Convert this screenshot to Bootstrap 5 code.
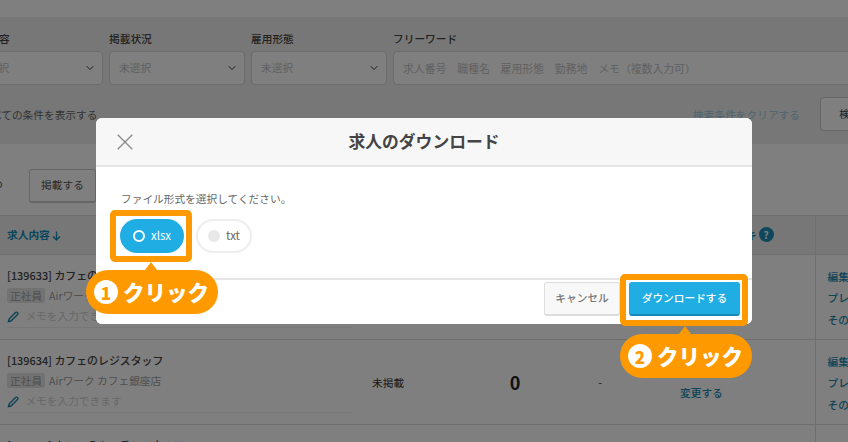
<!DOCTYPE html>
<html lang="ja">
<head>
<meta charset="utf-8">
<title>求人のダウンロード</title>
<link href="https://cdn.jsdelivr.net/npm/bootstrap@5.3.0/dist/css/bootstrap.min.css" rel="stylesheet">
<style>
html,body{height:442px;overflow:hidden}
body{width:848px;font-family:"Noto Sans CJK JP","Noto Sans",sans-serif;font-size:10.7px;color:#333;background:#fff}
.topgap{height:17px;background:#fff}
.filterband{height:127px;background:#eee;padding:14px 0 0 0;border-top:1px solid #e8e8e8}
.fields{gap:6px;margin-left:-33px;width:1000px}
.fieldw{width:136px;flex:none}
.fieldw.wide{width:520px}
.fieldlabel{height:13px;line-height:13px;margin-bottom:6px;font-weight:500;color:#444;white-space:nowrap}
.selbox.form-select,.txtbox.form-control{height:34px;font-size:10.7px;padding:0 28px 0 9px;color:#c2c2c2;border-color:#d8d8d8;border-radius:4px;line-height:32px;background-color:#fff}
.txtbox.form-control{font-size:10.850px}
.selbox.form-select{background-size:10px 8px;background-position:right 7px center}
.txtbox.form-control::placeholder{color:#c2c2c2;opacity:1}
.linksrow{height:34px;margin-top:12px;padding-left:0}
.alltext{color:#666;margin-left:-19px;white-space:nowrap;width:117px;padding-top:2px}
.clearlink{color:#9fcbdb;margin-right:20px;padding-top:2px}
.searchbtn.btn{width:60px;height:34px;font-size:10.7px;background:#fff;border:1px solid #ccc;border-radius:4px;color:#444;padding:0;margin-right:-32px}
.toolband{height:71px;background:#fff;padding-top:25px;border-top:0;gap:26px}
.tooltext{margin-left:-32px;width:35px;text-align:right;color:#444;white-space:nowrap;padding-top:4px}
.toolband .btn{height:34px;width:67px;font-size:10.7px;color:#555;background:#fff;border:1px solid #ccc;border-bottom-width:2px;border-radius:3px;padding:0}
.jobtable.table{table-layout:fixed;width:848px;margin:0;font-size:10.7px;--bs-table-bg:transparent;--bs-table-color:#333;border-color:#dcdcdc}
.jobtable col.c1{width:362px}.jobtable col.c2{width:108px}.jobtable col.c3{width:90px}.jobtable col.c4{width:80px}.jobtable col.c5{width:175px}
.jobtable th{height:39px;padding:0 7px;background:#eee;vertical-align:middle;border-top:1px solid #ddd;font-weight:700;color:#0f8cb8}
.jobtable th.keyhead{padding-right:41px}
.jobtable td{height:85px;padding:0;vertical-align:middle;border-bottom:1px solid #dcdcdc}
.jobtable .act{border-left:1px solid #dcdcdc}
.jobcell{padding:12px 9px 0 7px;height:84px}
.jobtitle{font-size:10.9px;line-height:16px;font-weight:500;color:#444;white-space:nowrap}
.jobmeta{margin-top:5px;line-height:15px;color:#a0a0a0;white-space:nowrap}
.tagchip{display:inline-block;background:#e4e4e4;color:#a0a0a0;border-radius:2px;padding:0 3px;margin-right:4px}
.memoline{margin-top:4px;height:21px;line-height:18px;color:#d0d0d0;border-bottom:1px solid #eee;width:346px;white-space:nowrap}
.jobtable .statuscell{padding:2px 0 0 10px;color:#333}
.jobtable .numcell{text-align:center;font-size:18px;font-weight:600;color:#222}
.dashcell{text-align:center}
.jobtable .changecell{padding-left:40px;padding-top:22px;color:#1b87ad;font-weight:500;white-space:nowrap}
.jobtable .actcell{padding:2px 0 0 12px;color:#1b87ad;font-weight:500;white-space:nowrap;line-height:21.500px}
.qmark{display:inline-flex;width:15px;height:15px;border-radius:50%;background:#1c8fbb;color:#fff;align-items:center;justify-content:center;font-size:10px;font-weight:700;margin-left:2px}
.dimlayer{inset:0;background:rgba(0,0,0,.5);padding:118px 0 0 96px}
.dlgbox.modal-content{width:656px;height:206px;border:0;border-radius:6px;background:#fff;overflow:hidden}
.dlghead.modal-header{height:49px;flex:none;padding:0 20px;background:#f7f7f7;border-bottom:2px solid #e6e6e6;border-radius:0;position:relative;justify-content:center}
.dlgclose{position:absolute;left:21px;top:16px;line-height:0}
.dlgtitle.modal-title{font-size:16.800px;font-weight:700;color:#444;line-height:1}
.dlgbody.modal-body{flex:none;height:111px;padding:26px 24px 0}
.dlgprompt{line-height:12px;color:#666;font-size:10.700px;margin-bottom:14px;padding-left:1px}
.pillopt{height:34px;border-radius:17px;gap:6px;font-size:11.500px}
.pillopt.on{width:64px;background:#1fade4;color:#fff;padding-left:13px}
.pillopt.off{width:56px;background:#fff;border:2px solid #eee;color:#666;padding-left:10px}
.dotring{width:12px;height:12px;border-radius:50%;flex:none}
.on .dotring{border:2px solid #fff}
.off .dotring{background:#e8e8e8}
.dlgfoot.modal-footer{height:46px;flex:none;padding:0 12px 6px 0;background:#fff;border-top:2px solid #e6e6e6;border-radius:0;gap:9px;flex-wrap:nowrap;justify-content:flex-end;align-items:center}
.dlgfoot.modal-footer>*{margin:0}
.btncancel.btn,.btnget.btn{height:34px;font-size:10.7px;padding:0;border-radius:3px;font-weight:500}
.btncancel.btn{width:76px;background:#f8f8f8;color:#777;border:1px solid #ddd;border-bottom-width:2px}
.btnget.btn{width:111px;background:#1fade4;color:#fff;border:1px solid #1fade4;border-bottom:2px solid #1588b8}
.hiliteframe{border:6px solid #f90;border-radius:5px;height:52px}
.hf1{left:110px;top:210px;width:82px}
.hf2{left:620px;top:274px;width:128px}
.callpill{width:132px;height:44px;border-radius:22px;background:#f90;color:#fff;padding-left:8px;gap:5px}
.callpill::before{content:"";position:absolute;left:59px;top:-8px;border-left:6px solid transparent;border-right:6px solid transparent;border-bottom:8px solid #f90}
.cp1{left:86px;top:270px}
.cp2{left:620px;top:334px}
.cpnum{width:24px;height:24px;flex:none;border-radius:50%;background:#fff;color:#f90;font-weight:900;font-size:17px;line-height:1}
.cptext{font-size:21.500px;font-weight:900;line-height:1;white-space:nowrap}
</style>
</head>
<body class="position-relative">
<div class="topgap"></div>
<section class="filterband">
  <div class="d-flex fields">
    <div class="fieldw"><div class="fieldlabel">求人内容</div><select class="form-select selbox"><option>未選択</option></select></div>
    <div class="fieldw"><div class="fieldlabel">掲載状況</div><select class="form-select selbox"><option>未選択</option></select></div>
    <div class="fieldw"><div class="fieldlabel">雇用形態</div><select class="form-select selbox"><option>未選択</option></select></div>
    <div class="fieldw wide"><div class="fieldlabel">フリーワード</div><input class="form-control txtbox" placeholder="求人番号　職種名　雇用形態　勤務地　メモ（複数入力可）"></div>
  </div>
  <div class="d-flex align-items-center justify-content-between linksrow">
    <span class="alltext">すべての条件を表示する</span>
    <span class="d-flex align-items-center"><span class="clearlink">検索条件をクリアする</span><button class="btn searchbtn">検索</button></span>
  </div>
</section>
<section class="toolband d-flex align-items-start"><span class="tooltext lh-lg">まとめ</span><button class="btn">掲載する</button></section>
<table class="table jobtable">
  <colgroup><col class="c1"><col class="c2"><col class="c3"><col class="c4"><col class="c5"><col></colgroup>
  <thead><tr><th>求人内容 <svg width="9" height="10" viewBox="0 0 9 10" fill="none" stroke="#0f8cb8" stroke-width="1.4"><path d="M4.500 0.500V9M1 5.500l3.500 3.500 3.500-3.500"/></svg></th><th></th><th></th><th></th><th class="text-end keyhead">キ<span class="qmark">?</span></th><th class="act"></th></tr></thead>
  <tbody>
    <tr>
      <td><div class="jobcell"><div class="jobtitle">[139633] カフェのホールスタッフ</div><div class="jobmeta"><span class="tagchip">正社員</span>Airワーク カフェ銀座店</div><div class="memoline"><svg class="me-1" width="12" height="12" viewBox="0 0 12 12" fill="none" stroke="#1b87ad" stroke-width="1.400"><path d="M1.500 10.500l.6-2.500L8.500 1.500a1.300 1.300 0 0 1 2 2L4 10z"/></svg> メモを入力できます</div></div></td>
      <td class="statuscell">未掲載</td><td class="numcell">0</td><td class="dashcell">-</td><td class="changecell">変更する</td>
      <td class="act actcell">編集<br>プレ<br>その</td>
    </tr>
    <tr>
      <td><div class="jobcell"><div class="jobtitle">[139634] カフェのレジスタッフ</div><div class="jobmeta"><span class="tagchip">正社員</span>Airワーク カフェ銀座店</div><div class="memoline"><svg class="me-1" width="12" height="12" viewBox="0 0 12 12" fill="none" stroke="#1b87ad" stroke-width="1.400"><path d="M1.500 10.500l.6-2.500L8.500 1.500a1.300 1.300 0 0 1 2 2L4 10z"/></svg> メモを入力できます</div></div></td>
      <td class="statuscell">未掲載</td><td class="numcell">0</td><td class="dashcell">-</td><td class="changecell">変更する</td>
      <td class="act actcell">編集<br>プレ<br>その</td>
    </tr>
    <tr>
      <td><div class="jobcell"><div class="jobtitle">[139635] カフェのキッチンスタッフ</div></div></td>
      <td></td><td></td><td></td><td></td><td class="act actcell">編集</td>
    </tr>
  </tbody>
</table>

<div class="position-absolute dimlayer">
  <div class="modal-content dlgbox">
    <div class="modal-header dlghead">
      <span class="dlgclose"><svg width="16" height="16" viewBox="0 0 16 16" fill="none" stroke="#888" stroke-width="1.300"><path d="M.7.700l14.600 14.600M15.300.700L.7 15.300"/></svg></span>
      <h5 class="modal-title dlgtitle">求人のダウンロード</h5>
    </div>
    <div class="modal-body dlgbody">
      <div class="dlgprompt">ファイル形式を選択してください。</div>
      <div class="d-flex gap-2">
        <div class="d-flex align-items-center pillopt on"><span class="dotring"></span>xlsx</div>
        <div class="d-flex align-items-center pillopt off ms-1"><span class="dotring"></span>txt</div>
      </div>
    </div>
    <div class="modal-footer dlgfoot">
      <button class="btn btncancel">キャンセル</button>
      <button class="btn btnget">ダウンロードする</button>
    </div>
  </div>
</div>

<div class="position-absolute hiliteframe hf1"></div>
<div class="position-absolute hiliteframe hf2"></div>
<div class="position-absolute d-flex align-items-center callpill cp1"><span class="d-flex align-items-center justify-content-center cpnum">1</span><span class="cptext">クリック</span></div>
<div class="position-absolute d-flex align-items-center callpill cp2"><span class="d-flex align-items-center justify-content-center cpnum">2</span><span class="cptext">クリック</span></div>
<script src="https://cdn.jsdelivr.net/npm/bootstrap@5.3.0/dist/js/bootstrap.bundle.min.js"></script>
</body>
</html>
